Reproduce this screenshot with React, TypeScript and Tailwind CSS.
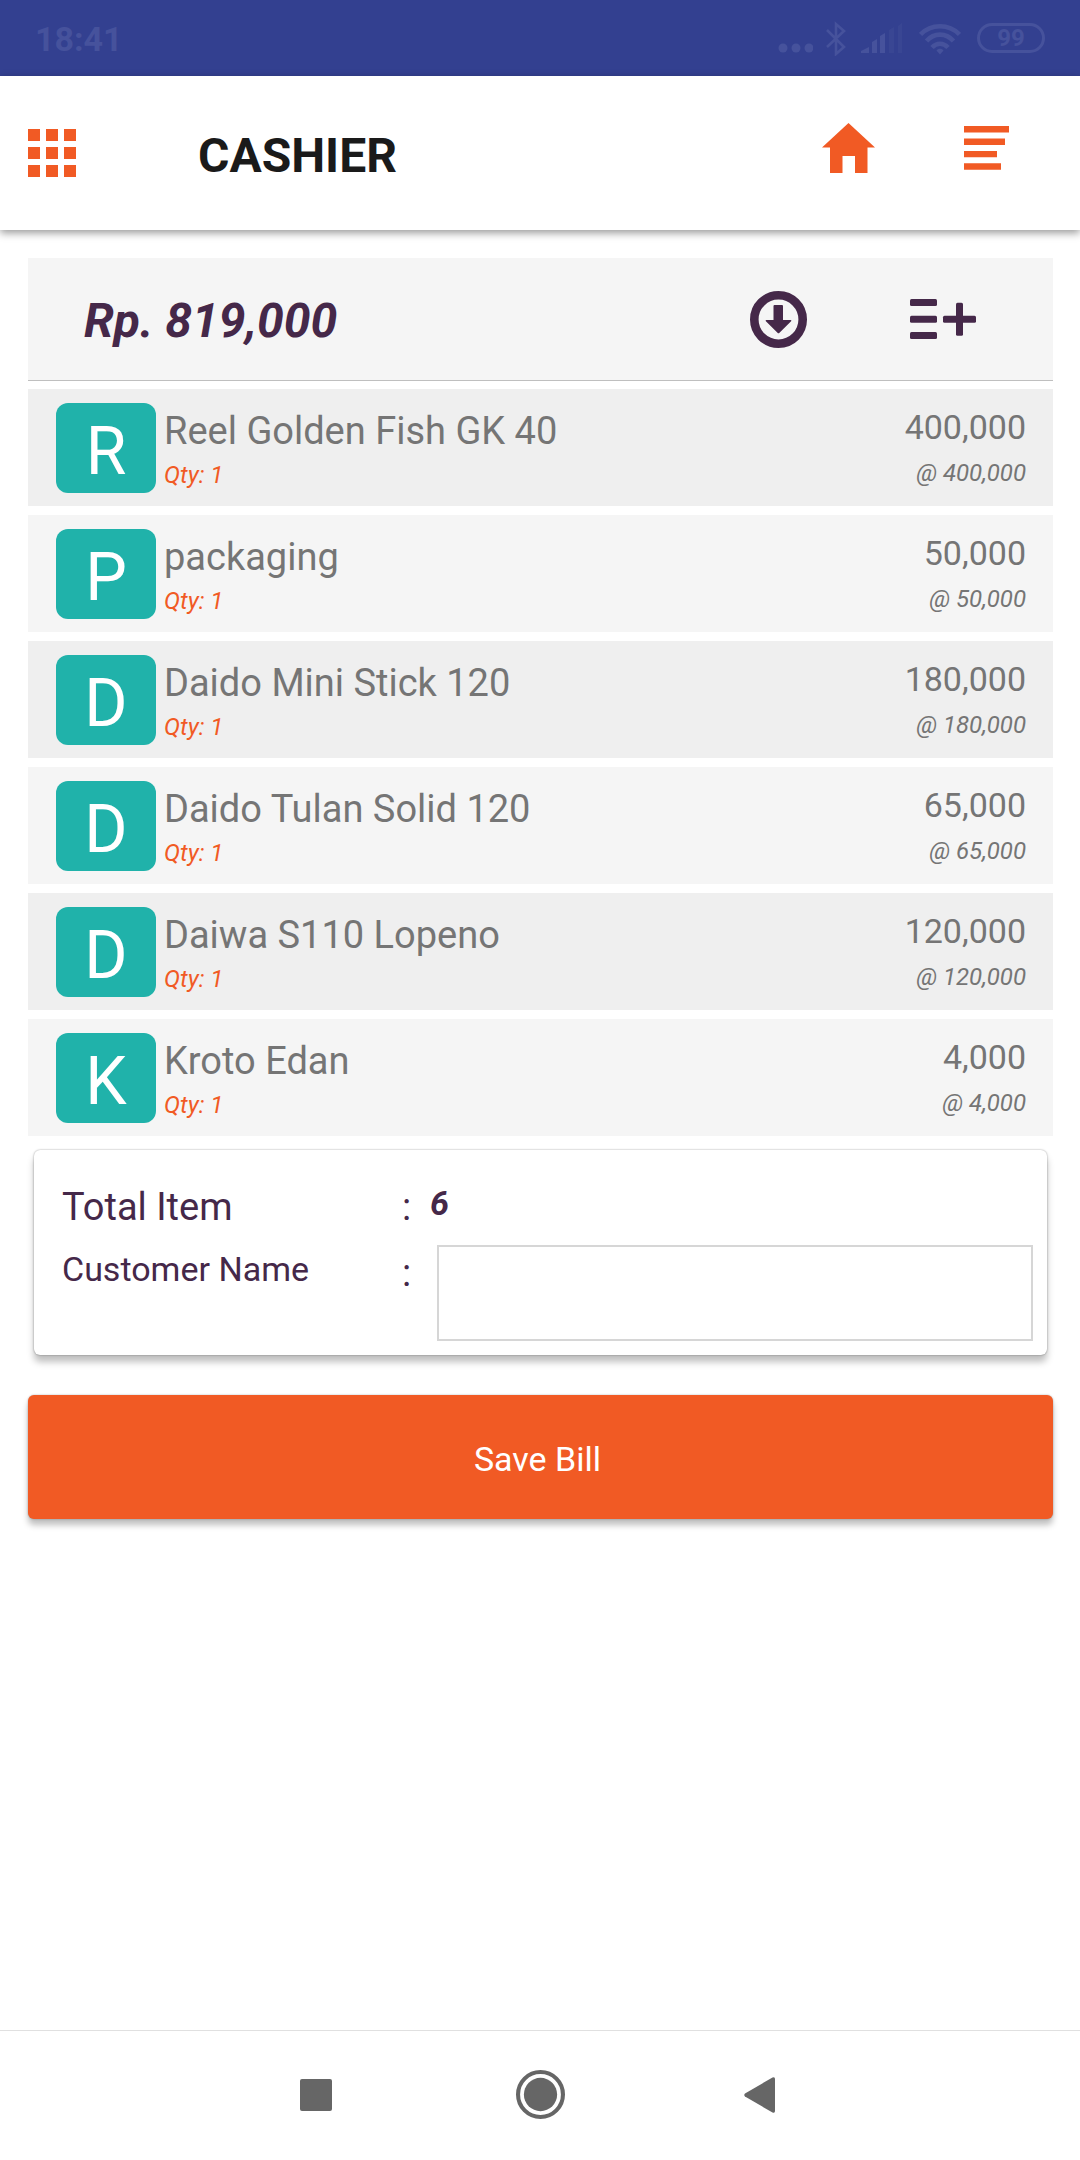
import { useState } from 'react'

const items = [
  { name: 'Reel Golden Fish GK 40', qty: 1, price: 400000 },
  { name: 'packaging', qty: 1, price: 50000 },
  { name: 'Daido Mini Stick 120', qty: 1, price: 180000 },
  { name: 'Daido Tulan Solid 120', qty: 1, price: 65000 },
  { name: 'Daiwa S110 Lopeno', qty: 1, price: 120000 },
  { name: 'Kroto Edan', qty: 1, price: 4000 },
]

const format = (n: number) => n.toLocaleString('en-US')

export default function App() {
  const total = items.reduce((sum, item) => sum + item.price * item.qty, 0)

  return (
    <div className="min-h-screen flex flex-col bg-white font-[Roboto,sans-serif]">
      <StatusBar />
      <Header />
      <main className="pl-7 pr-[27px] pt-7 pb-10">
        <TotalBar total={total} />
        <ul className="mt-2 flex flex-col gap-[9px]">
          {items.map(item => (
            <li
              key={item.name}
              className="flex items-start gap-2 pl-7 pr-[27px] pt-3.5 pb-[13px] odd:bg-[#efefef] even:bg-[#f5f5f5]"
            >
              <div className="w-[100px] h-[90px] pt-2 shrink-0 rounded-xl bg-[#20b2aa] text-white text-[66px] leading-none flex items-center justify-center">
                {item.name[0].toUpperCase()}
              </div>
              <div className="flex-1 min-w-0 pt-1.5">
                <p className="text-[38px] leading-11 text-[#757575]">{item.name}</p>
                <p className="mt-2 text-2xl leading-7 italic text-[#f15a24]">Qty: {item.qty}</p>
              </div>
              <div className="text-right text-[#757575] pt-1">
                <p className="text-[34px] leading-10">{format(item.price * item.qty)}</p>
                <p className="mt-3 text-2xl leading-7 italic">@ {format(item.price)}</p>
              </div>
            </li>
          ))}
        </ul>
        <BillForm count={items.length} />
      </main>
      <SystemNav />
    </div>
  )
}

function StatusBar() {
  return (
    <div className="h-[76px] shrink-0 bg-[#334090] text-[#46529c] flex items-center justify-between px-[35px]">
      <span className="pt-0.5 text-[34px] leading-10 font-bold">18:41</span>
      <div className="flex items-center">
        <svg className="w-9 h-9 mr-3" viewBox="0 0 36 36" fill="currentColor">
          <circle cx="6" cy="28" r="4.5" />
          <circle cx="19" cy="28" r="4.5" />
          <circle cx="32" cy="28" r="4.5" />
        </svg>
        <svg className="w-[22px] h-9 mr-3.5" viewBox="0 0 22 36" fill="none" stroke="currentColor" strokeWidth="2.6">
          <path d="M2 10l17 17-8 7V4l8 7L2 27" />
        </svg>
        <svg className="w-[42px] h-9 mr-4" viewBox="0 0 42 36" fill="currentColor">
          <path d="M0 33v-2l8-4v6zM11 22l5-3v14h-5zM19 16l5-3v20h-5z" />
          <path d="M28 10l5-3v26h-5zM37 6l4-3v30h-4z" opacity=".35" />
        </svg>
        <svg className="w-[42px] h-9 mr-4" viewBox="0 0 42 36" fill="none" stroke="currentColor" strokeWidth="4.600">
          <path d="M1.500 14.500C12 3.500 30 3.500 40.500 14.500M7.500 21C15 12.500 27 12.500 34.500 21M13 27.500c4.500-5 11.500-5 16 0" />
          <path d="M21 34.500l-3.500-4c1.500-2.500 5.500-2.500 7 0z" fill="currentColor" stroke="none" />
        </svg>
        <span className="w-[68px] h-[30px] rounded-full border-3 border-current flex items-center justify-center text-2xl leading-6 font-bold">
          99
        </span>
      </div>
    </div>
  )
}

function Header() {
  return (
    <header className="h-[154px] shrink-0 pl-7 pr-[71px] flex items-center shadow-[0_3px_8px_rgba(0,0,0,0.4)]">
      <button aria-label="Apps">
        <svg className="w-12 h-12" viewBox="0 0 48 48" fill="#f15a24">
          <path d="M0 0h12v12H0zM18 0h12v12H18zM36 0h12v12H36zM0 18h12v12H0zM18 18h12v12H18zM36 18h12v12H36zM0 36h12v12H0zM18 36h12v12H18zM36 36h12v12H36z" />
        </svg>
      </button>
      <h1 className="ml-[122px] pt-1.5 text-5xl leading-14 font-bold text-[#1a1a1a]">CASHIER</h1>
      <nav className="ml-auto pb-2.5 flex items-center gap-[89px]">
        <a href="#home" aria-label="Home">
          <svg className="w-[53px] h-[50px]" viewBox="0 0 53 50" fill="#f15a24">
            <path d="M26.500 0L53 24.500h-7.500V50H33V33H20.500v17H8V24.500H0z" />
          </svg>
        </a>
        <button aria-label="Bills">
          <svg className="w-[45px] h-11" viewBox="0 0 45 44" fill="#f15a24">
            <path d="M0 0h45v6.500H0zM0 12.500h41v6.500H0zM0 25h33v6.200H0zM0 37.300h37v6.500H0z" />
          </svg>
        </button>
      </nav>
    </header>
  )
}

function TotalBar({ total }: { total: number }) {
  return (
    <div className="h-[123px] pl-14 pr-[77px] flex items-center bg-[#f5f5f5] border-b border-[#bfbfbf]">
      <p className="pt-1 text-5xl leading-14 font-bold italic text-[#452849]">Rp. {format(total)}</p>
      <div className="ml-auto flex items-center gap-[103px]">
        <button aria-label="Load bill">
          <svg className="w-[57px] h-[57px]" viewBox="0 0 57 57" fill="#452849">
            <circle cx="28.500" cy="28.500" r="24.200" fill="none" stroke="#452849" strokeWidth="8.600" />
            <path d="M24.500 14h7.500q1 0 1 1v14h7.500q1.500 0 .6 1.200L29.500 41.700q-1 1-2 0L15.900 30.200q-.9-1.200.6-1.200h7V15q0-1 1-1z" />
          </svg>
        </button>
        <button aria-label="Add item">
          <svg className="w-[66px] h-10" viewBox="0 0 66 40" fill="#452849">
            <rect width="27" height="7" rx="1.500" />
            <rect y="16.800" width="27" height="7" rx="1.500" />
            <rect y="33" width="27" height="7" rx="1.500" />
            <rect x="33" y="16.800" width="33" height="7" rx="1.500" />
            <rect x="46" y="3.800" width="7" height="33" rx="1.500" />
          </svg>
        </button>
      </div>
    </div>
  )
}

function BillForm({ count }: { count: number }) {
  const [customer, setCustomer] = useState('')

  return (
    <form onSubmit={e => e.preventDefault()}>
      <div className="mt-3.5 mx-1.5 pt-[33px] pb-3.5 pl-7 pr-3.5 rounded-md text-[#452849] shadow-[0_0_2px_rgba(0,0,0,0.4),0_7px_7px_rgba(0,0,0,0.25)]">
        <div className="flex items-start">
          <span className="w-[340px] shrink-0 pt-0.5 text-[38px] leading-11">Total Item</span>
          <span className="w-7 shrink-0 pt-0.5 text-[38px] leading-11">:</span>
          <span className="text-[34px] leading-10 font-bold italic">{count}</span>
        </div>
        <div className="mt-4 flex items-start">
          <label htmlFor="customer" className="w-[340px] shrink-0 pt-1 text-[34px] leading-10">
            Customer Name
          </label>
          <span className="w-7 shrink-0 pt-1.5 text-[38px] leading-11">:</span>
          <input
            id="customer"
            type="text"
            value={customer}
            onChange={e => setCustomer(e.target.value)}
            className="ml-[7px] flex-1 min-w-0 h-24 px-4 text-[34px] border-2 border-[#d6d6d6] outline-none"
          />
        </div>
      </div>
      <button
        type="submit"
        className="mt-10 w-full h-[124px] pt-1 pr-1.5 rounded-md bg-[#f15a24] text-white text-[34px] leading-10 shadow-[0_0_2px_rgba(0,0,0,0.3),0_6px_6px_rgba(0,0,0,0.25)]"
      >
        Save Bill
      </button>
    </form>
  )
}

function SystemNav() {
  return (
    <nav className="mt-auto h-[130px] shrink-0 pb-0.5 border-t border-[#e0e0e0] flex items-center justify-center">
      <button aria-label="Recent apps" className="w-56 flex justify-center">
        <svg className="w-8 h-8" viewBox="0 0 32 32" fill="#666">
          <rect width="32" height="32" rx="2" />
        </svg>
      </button>
      <button aria-label="Home screen" className="w-56 flex justify-center">
        <svg className="w-[49px] h-[49px]" viewBox="0 0 48 48" fill="#666">
          <circle cx="24" cy="24" r="22" fill="none" stroke="#666" strokeWidth="4" />
          <circle cx="24" cy="24" r="16.300" />
        </svg>
      </button>
      <button aria-label="Back" className="w-56 flex justify-center">
        <svg className="w-10 h-9" viewBox="0 0 40 36" fill="#666">
          <path d="M1 16.500L28.500.500Q31-.5 31 2v32q0 2.500-2.500 1.500L1 19.500q-1.500-1.500 0-3z" />
        </svg>
      </button>
    </nav>
  )
}
